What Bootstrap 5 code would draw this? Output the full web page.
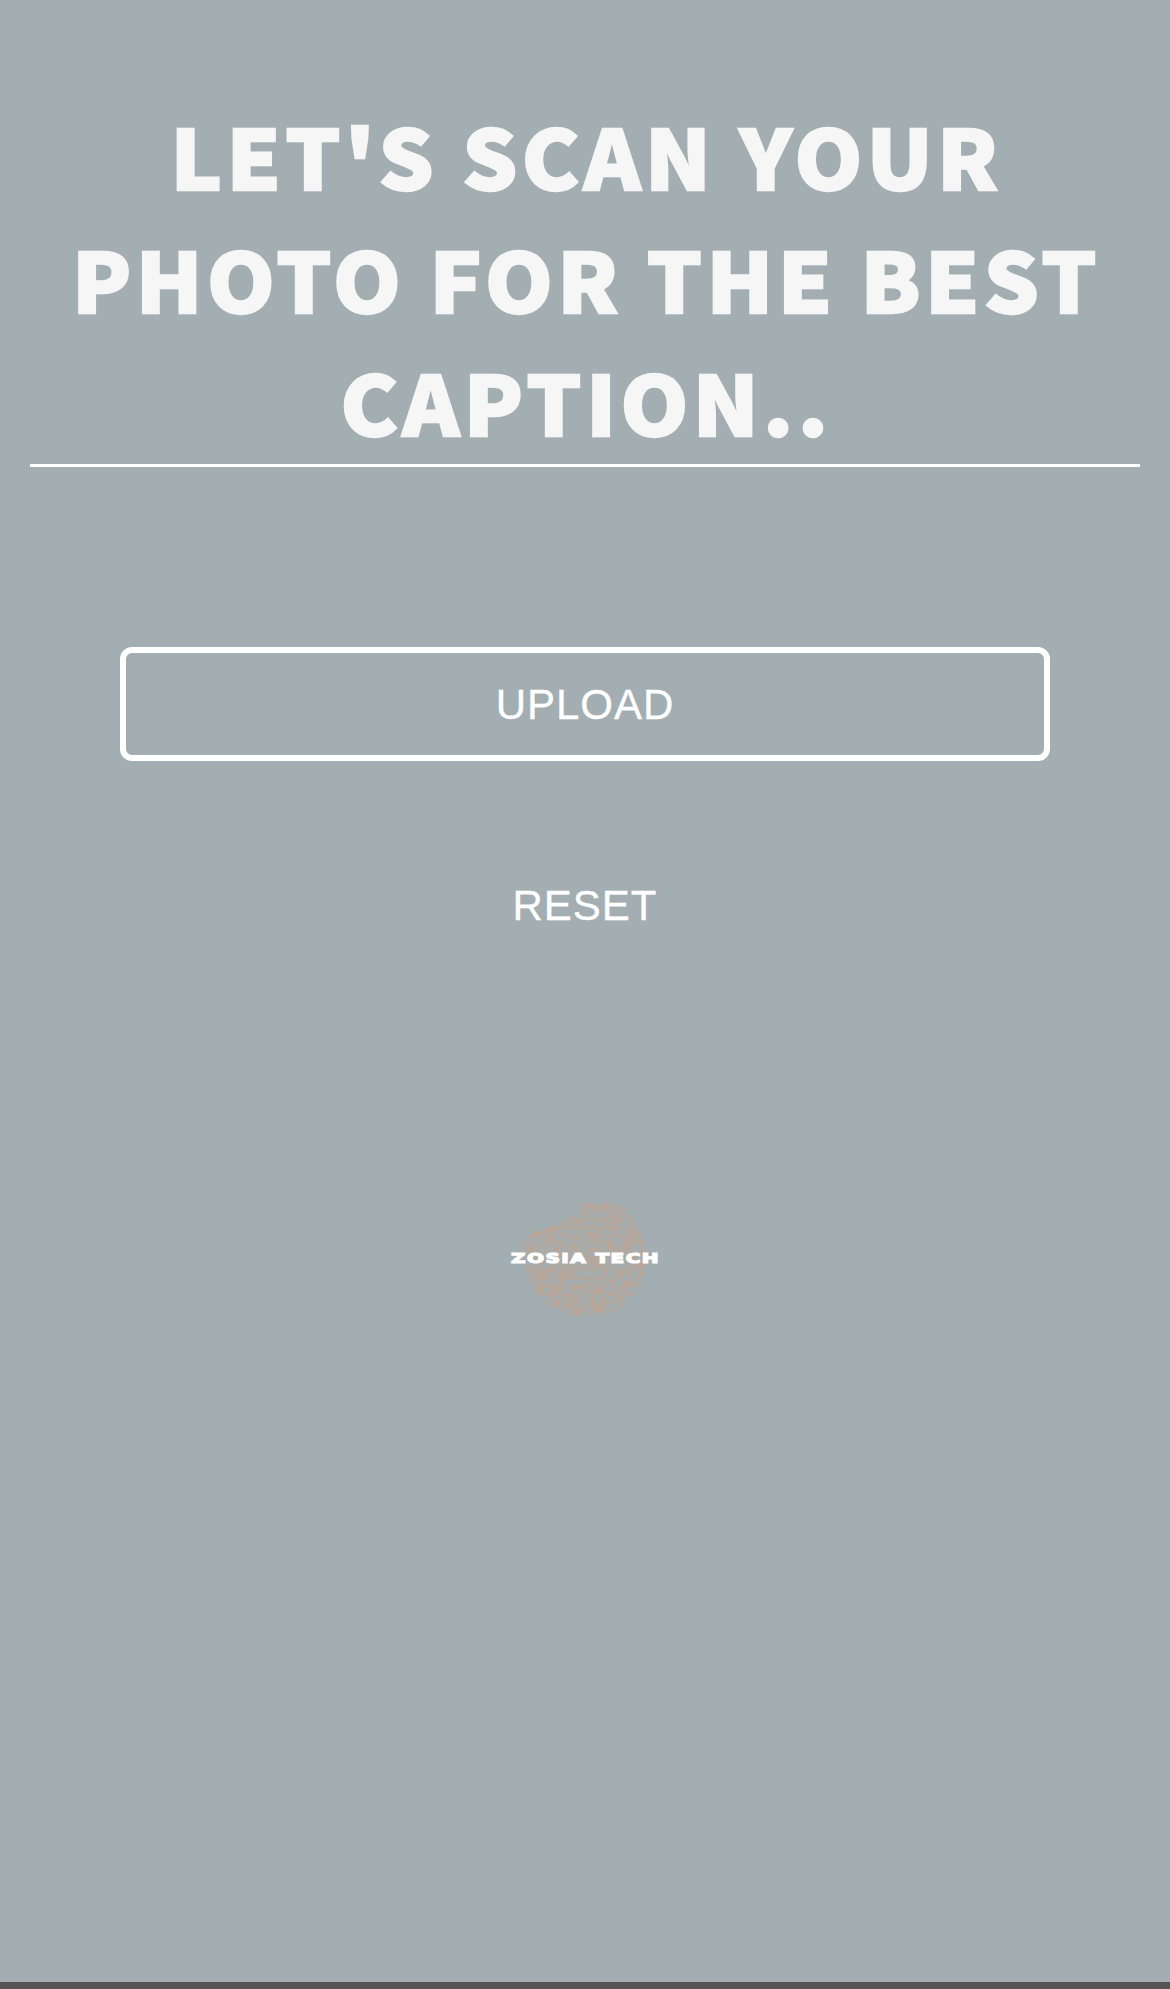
<!DOCTYPE html>
<html lang="en">
<head>
<meta charset="utf-8">
<meta name="viewport" content="width=device-width, initial-scale=1">
<title>Caption Scanner</title>
<link rel="stylesheet" href="https://cdn.jsdelivr.net/npm/bootstrap@5.3.0/dist/css/bootstrap.min.css">
<style>
  body { background: #a2aeb2; font-family: "Liberation Sans", Arial, sans-serif; }
  .scan-page { padding: 93px 30px 0; }
  .scan-title {
    height: 374px; border-bottom: 3px solid #fff; color: #f6f6f6; padding-left: 3px;
    font: 900 82px/123px "Noto Sans CJK SC", "Noto Sans", sans-serif;
    letter-spacing: 4.2px; -webkit-text-stroke: 2.3px #f6f6f6;
  }
  .title-wide { transform: scaleX(1.052); }
  .scan-actions { margin: 180px 90px 0; }
  .btn-scan {
    --bs-btn-color: #fff; --bs-btn-border-color: #fff; --bs-btn-border-width: 6px;
    --bs-btn-border-radius: 12px; --bs-btn-padding-y: 0;
    height: 114px; padding-top: 2px; font-size: 42px; line-height: 1; letter-spacing: 1px;
    -webkit-text-stroke: .3px #fff;
  }
  .btn-plain { --bs-btn-border-color: transparent; margin-top: 87px; }
  .brand-logo { margin-top: 233px; }
  .brand-name { font: 700 14px "DejaVu Sans", sans-serif; fill: #fff; stroke: #fff; stroke-width: 1.2px; letter-spacing: 1px; }
  .page-foot { height: 7px; background: #555556; }
</style>
</head>
<body class="min-vh-100 d-flex flex-column">
<main class="scan-page flex-grow-1 text-center">
  <h1 class="scan-title text-uppercase mb-0"><span class="title-wide d-block">Let's scan your<br>photo for the best<br>caption..</span></h1>
  <div class="scan-actions d-grid">
    <button type="button" class="btn btn-scan">UPLOAD</button>
    <button type="button" class="btn btn-scan btn-plain">RESET</button>
  </div>
  <svg class="brand-logo" width="160" height="130" viewBox="0 0 160 130" role="img" aria-label="Zosia Tech">
    <defs>
      <filter id="grain" x="0" y="0" width="100%" height="100%" color-interpolation-filters="sRGB">
        <feTurbulence type="turbulence" baseFrequency=".12" numOctaves="3" seed="8"/>
        <feColorMatrix values="0 0 0 0 .76  0 0 0 0 .64  0 0 0 0 .56  -4 0 0 0 1.35"/>
        <feGaussianBlur stdDeviation=".5"/>
        <feComposite in2="SourceGraphic" operator="in"/>
      </filter>
      <path id="planet" d="M18 43Q25 36 39 34Q53 30 67 21Q76 19 73 14Q69 9 76 8Q86 6 92 10Q99 5 110 8Q121 12 125 20Q133 27 136 38Q142 49 140 68Q138 90 124 105Q107 123 84 122Q61 122 42 109Q22 94 18 70Q14 53 18 43Z"/>
    </defs>
    <use href="#planet" fill="#c2a595" opacity=".16"/>
    <use href="#planet" fill="#c2a595" opacity=".9" filter="url(#grain)"/>
    <text class="brand-name" x="6" y="68" textLength="149" lengthAdjust="spacingAndGlyphs">ZOSIA TECH</text>
  </svg>
</main>
<footer class="page-foot"></footer>
<script src="https://cdn.jsdelivr.net/npm/bootstrap@5.3.0/dist/js/bootstrap.bundle.min.js"></script>
</body>
</html>
